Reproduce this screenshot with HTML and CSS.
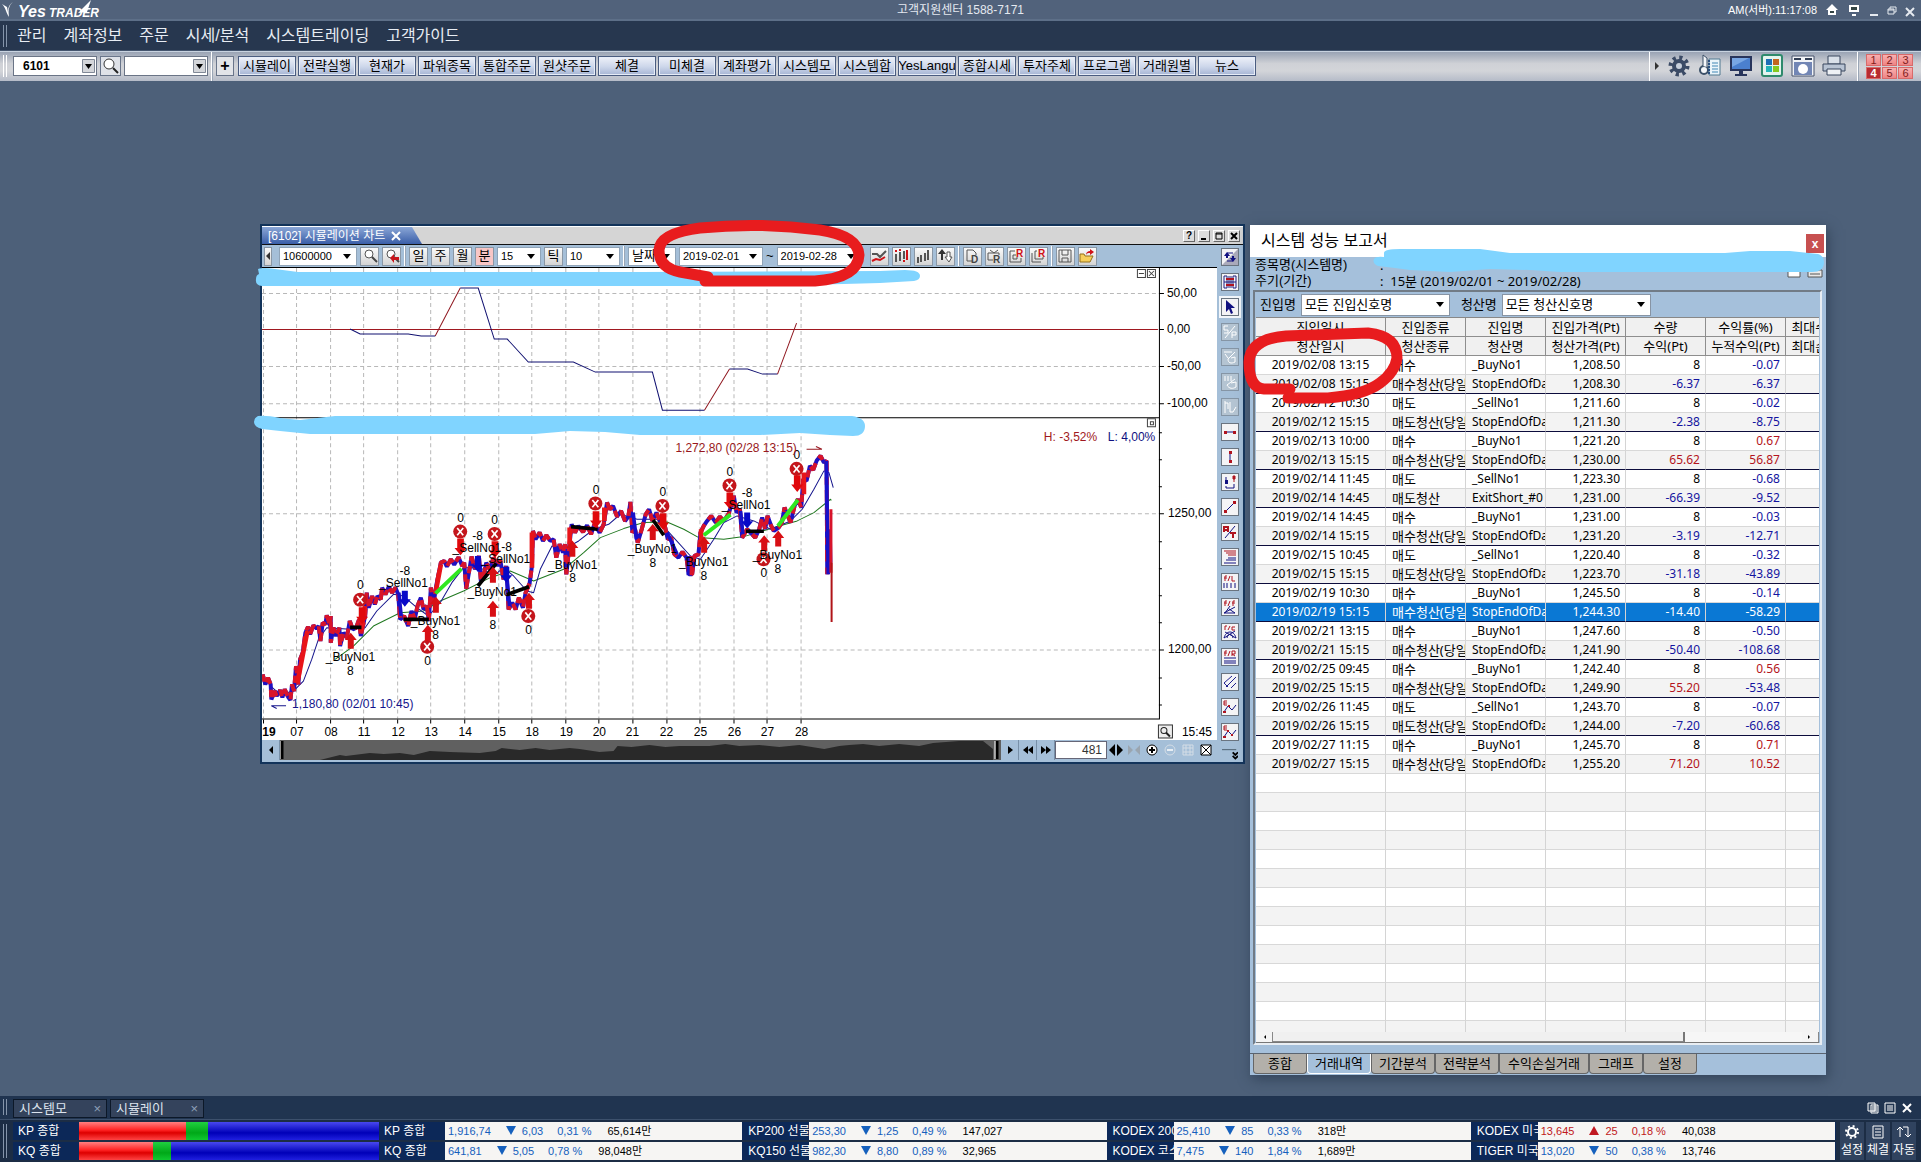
FILE: index.html
```html
<!DOCTYPE html>
<html lang="ko">
<head>
<meta charset="utf-8">
<title>YesTrader</title>
<link rel="stylesheet" href="styles.css">
</head>
<body>
<svg class="defs" aria-hidden="true">
  <defs>
    <g id="up"><path d="M0 0L18 22H9V48H-9V22H-18Z" fill="#d80f14"/></g>
    <g id="down"><path d="M0 0L18 -22H10V-50H-10V-22H-18Z" fill="#e0080c"/></g>
    <g id="short"><path d="M0 0L18 -22H9V-48H-9V-22H-18Z" fill="#0808c8"/></g>
    <g id="exit"><circle r="21" fill="#c4161c"/><path d="M-9 -11L9 11M9 -11L-9 11" stroke="#fff" stroke-width="5"/></g>
    <g id="glass"><circle cx="7" cy="6" r="4" fill="#fff" stroke="#555"/><path d="M10 9l5 5" stroke="#444" stroke-width="2"/></g>
    <path id="px" d="M38 735L46 765L54 745L62 765L64 810L74 785L80 800L90 782L97 804L104 780L114 802L121 812L126 765L132 785L138 710L145 765L150 690L158 670L166 610L174 592L180 615L190 588L200 598L206 590L211 635L218 580L226 585L230 558L240 590L242 560L242 640L250 595L258 620L268 595L270 650L280 610L290 625L299 575L308 600L318 595L327 570L332 620L345 560L350 490L356 535L366 500L374 525L382 500L392 510L396 475L406 495L416 472L426 490L436 475L444 495L450 570L462 560L474 590L484 545L494 568L502 530L512 505L520 540L530 530L536 575L542 475L550 525L558 470L566 430L572 400L582 395L590 412L602 390L612 406L625 384L636 410L642 400L648 478L656 430L664 382L674 420L686 380L692 456L700 440L708 400L718 420L730 385L742 410L750 392L760 450L768 410L775 540L786 520L796 540L806 505L818 535L826 490L838 462L845 410L848 305L856 330L868 310L878 335L888 318L900 335L910 330L918 385L928 345L938 370L944 345L948 435L956 360L964 285L974 310L984 290L998 308L1010 288L1022 315L1032 285L1048 310L1060 285L1070 220L1078 240L1088 230L1100 262L1112 245L1124 275L1134 262L1140 218L1146 310L1154 300L1162 340L1174 300L1186 255L1196 240L1206 275L1218 250L1230 280L1242 285L1252 330L1262 325L1272 375L1284 385L1296 368L1308 385L1315 435L1325 435L1332 380L1344 375L1350 310L1360 290L1370 275L1382 260L1396 280L1408 262L1420 275L1434 255L1442 230L1450 200L1458 250L1468 240L1475 325L1490 300L1502 312L1514 325L1526 300L1535 265L1544 300L1551 260L1562 290L1570 305L1584 295L1594 280L1602 235L1612 260L1620 280L1632 230L1642 210L1652 235L1658 150L1668 155L1678 110L1688 122L1698 95L1710 80L1720 100L1728 95L1730 435"/>
  </defs>
</svg>

<header class="titlebar">
  <svg class="logo" viewBox="0 0 104 20" role="img" aria-label="YesTrader">
    <path d="M2 4l5 3 2 10c-3-4-3-9-7-13zM13 2c-4 3-5 8-4 14-2-5-1-11 4-14z" fill="#fff"/>
    <path d="M78 13L91 0l-4 12z" fill="#fff"/>
    <text x="18" y="17" class="logo-yes">Yes</text>
    <text x="49" y="17" class="logo-trader">TRADER</text>
  </svg>
  <span class="support">고객지원센터 1588-7171</span>
  <div class="status">
    <span>AM(서버):11:17:08</span>
    <button aria-label="홈"><svg width="14" height="14"><path d="M7 1l6 6h-2v5H3V7H1z" fill="#fff"/><path d="M5 8h4v2H5z" fill="#344"/></svg></button>
    <button aria-label="화면"><svg width="14" height="14"><path d="M2 2h10v7H2zM5 11h4v2H5z" fill="#fff"/><path d="M4 4h6v3H4z" fill="#344"/></svg></button>
    <button aria-label="최소화"><svg width="10" height="14"><path d="M1 11h8v2H1z" fill="#e6eaf0"/></svg></button>
    <button aria-label="복원"><svg width="10" height="14"><path d="M3 6V4h6v5H7M1 6h6v5H1zM1 7h6" fill="none" stroke="#e6eaf0"/></svg></button>
    <button aria-label="닫기"><svg width="10" height="14"><path d="M1 5l8 8M9 5l-8 8" stroke="#e6eaf0" stroke-width="2"/></svg></button>
  </div>
</header>

<nav class="menu">
  <i class="grip"></i>
  <a href="#">관리</a><a href="#">계좌정보</a><a href="#">주문</a><a href="#">시세/분석</a><a href="#">시스템트레이딩</a><a href="#">고객가이드</a>
</nav>

<div class="toolbar">
  <i class="grip light"></i>
  <select class="code" aria-label="화면번호"><option>6101</option></select>
  <button class="sq" aria-label="검색"><svg width="18" height="18"><circle cx="7" cy="7" r="5" fill="#fff" stroke="#333"/><path d="M11 11l5 5" stroke="#222" stroke-width="2"/></svg></button>
  <select class="find" aria-label="메뉴"><option></option></select>
  <i class="vline"></i>
  <button class="plus" aria-label="추가">+</button>
  <div class="quick">
    <button>시뮬레이</button><button>전략실행</button><button>현재가</button><button>파워종목</button><button>통합주문</button><button>원샷주문</button><button>체결</button><button>미체결</button><button>계좌평가</button><button>시스템모</button><button>시스템합</button><button>YesLangu</button><button>종합시세</button><button>투자주체</button><button>프로그램</button><button>거래원별</button><button>뉴스</button>
  </div>
  <div class="tools">
    <button class="more" aria-label="더보기"><svg width="6" height="8"><path d="M1 0l4 4-4 4z" fill="#333"/></svg></button>
    <button aria-label="설정"><svg width="24" height="24"><circle cx="12" cy="12" r="8" fill="none" stroke="#3b4b66" stroke-width="5" stroke-dasharray="3 3.280"/><circle cx="12" cy="12" r="5" fill="#c8d0dc" stroke="#3b4b66" stroke-width="4"/></svg></button>
    <button aria-label="인증"><svg width="24" height="24"><circle cx="6" cy="16" r="4" fill="#f4f6f9" stroke="#3b5068" stroke-width="2"/><path d="M5 12V1l4 3v9" fill="#f4f6f9" stroke="#3b5068"/><path d="M11 5h11v16H11z" fill="#eaf4fa" stroke="#4f7890"/><path d="M14 9h6M14 12h6M14 15h6M14 18h6" stroke="#4187b5"/><path d="M11 6v15" stroke="#2a4f80" stroke-width="2" stroke-dasharray="2 1"/></svg></button>
    <button aria-label="모니터"><svg width="24" height="24"><path d="M1 2h22v15H1z" fill="#28355c"/><path d="M3 4h18v11H3z" fill="#4b80cf"/><path d="M3 13L20 4H3z" fill="#79a7e4"/><path d="M10 17h4v3h4v2H6v-2h4z" fill="#28355c"/></svg></button>
    <button aria-label="화면 배치"><svg width="24" height="24"><rect x="2" y="1" width="20" height="21" rx="2" fill="#e4f4ee" stroke="#2f8a6c" stroke-width="2"/><path d="M6 5h6v6H6z" fill="#1e6fb5"/><path d="M13 5h6v6h-6z" fill="#c2641f"/><path d="M6 12h6v6H6z" fill="#23b5b8"/><path d="M13 12h6v6h-6z" fill="#86c91e"/></svg></button>
    <button aria-label="캡처"><svg width="24" height="24"><path d="M1 2h22v20H1z" fill="#f3f5f8" stroke="#44506a"/><path d="M3 4h7v2H3zM14 4h7v2h-7z" fill="#333f55"/><path d="M3 8h18v13H3z" fill="#7286b5"/><circle cx="12" cy="15" r="5" fill="#fff"/></svg></button>
    <button aria-label="인쇄"><svg width="24" height="24"><path d="M6 2h12v8H6z" fill="#d9e0e9" stroke="#39475e"/><path d="M1 10h22v7H1z" fill="#b8c3d3" stroke="#39475e"/><path d="M5 15h14v6H5z" fill="#eef1f5" stroke="#39475e"/></svg></button>
    <i class="vline"></i>
    <div class="pages"><button>1</button><button>2</button><button>3</button><button class="on">4</button><button>5</button><button>6</button></div>
  </div>
</div>

<main class="desktop">
  <section class="win chart-win">
    <div class="chart-title">
      <h2>[6102] 시뮬레이션 차트 <button aria-label="탭 닫기"><svg width="10" height="10"><path d="M1 1l8 8M9 1l-8 8" stroke="#fff" stroke-width="2"/></svg></button></h2>
      <div class="winbtns">
        <button aria-label="도움말">?</button>
        <button aria-label="최소화"><svg width="8" height="8"><path d="M1 7h5" stroke="#000" stroke-width="2"/></svg></button>
        <button aria-label="최대화"><svg width="8" height="8"><path d="M1 1h6v6H1zM1 2h6" fill="none" stroke="#000"/></svg></button>
        <button aria-label="닫기"><svg width="8" height="8"><path d="M1 1l6 6M7 1l-6 6" stroke="#000" stroke-width="2"/></svg></button>
      </div>
    </div>
    <div class="chart-body">
      <div class="chart-main">
        <div class="chart-tools">
          <button class="thin" aria-label="이전"><svg width="4" height="8"><path d="M4 0v8L0 4z" fill="#333"/></svg></button>
          <select class="w78" aria-label="종목코드"><option>10600000</option></select>
          <button aria-label="종목 검색"><svg width="16" height="16"><use href="#glass"/></svg></button>
          <button aria-label="종목 재검색"><svg width="16" height="16"><use href="#glass"/><path d="M6 10l4-4v3h5v3h-5v3z" fill="#c8161c"/></svg></button>
          <i class="vline"></i>
          <button>일</button><button>주</button><button>월</button><button class="pink">분</button>
          <select class="w44" aria-label="분"><option>15</option></select>
          <button>틱</button>
          <select class="w54" aria-label="틱"><option>10</option></select>
          <i class="vline"></i>
          <select class="w48 ko" aria-label="기준"><option>날짜</option></select>
          <select class="w84" aria-label="시작일"><option>2019-02-01</option></select>
          <span>~</span>
          <select class="w84 last" aria-label="종료일"><option>2019-02-28</option></select>
          <button aria-label="지표"><svg width="16" height="16"><path d="M1 6h5l3 3 6-6" fill="none" stroke="#555" stroke-width="2"/><path d="M1 13l4-2 4 1 5-3" fill="none" stroke="#d01218" stroke-width="2"/></svg></button>
          <button aria-label="시스템"><svg width="16" height="16"><path d="M3 6v8M7 4v9M11 3v8" stroke="#555" stroke-width="2"/><path d="M3 2v2M7 1v2M11 12v2M14 2v10" stroke="#d01218" stroke-width="2"/></svg></button>
          <button aria-label="봉"><svg width="16" height="16"><path d="M3 9v6M6 7v7M10 5v8M13 2v10" stroke="#555" stroke-width="2"/></svg></button>
          <button aria-label="정렬"><svg width="16" height="16"><path d="M5 1l4 5H6v6H4V6H1z" fill="#333"/><path d="M10 4h3v5h2l-3 5-4-5h2z" fill="#fff" stroke="#555"/></svg></button>
          <i class="vline"></i>
          <button aria-label="문서"><svg width="16" height="16"><path d="M8 13H3V2h6l3 3v2" fill="none" stroke="#555"/><text x="7" y="15" class="glyph">D</text></svg></button>
          <button aria-label="방송"><svg width="16" height="16"><path d="M7 12H2V5h11v2M4 2l4 3 4-3" fill="none" stroke="#555"/><text x="7" y="15" class="glyph">R</text></svg></button>
          <button aria-label="그리드"><svg width="16" height="16"><path d="M7 3H2v11h11v-4M8 7H5v4h4v-2" fill="none" stroke="#555"/><text x="8" y="9" class="glyph red">R</text></svg></button>
          <button aria-label="복사"><svg width="16" height="16"><path d="M7 3H5v8h8v-2M2 5v9h9" fill="none" stroke="#555"/><text x="8" y="9" class="glyph red">R</text></svg></button>
          <i class="vline"></i>
          <button aria-label="저장"><svg width="16" height="16"><path d="M2 2h12v12H2zM5 2v5h6V2M5 14v-4h6v4" fill="none" stroke="#555"/></svg></button>
          <button aria-label="열기"><svg width="16" height="16"><path d="M1 14V6h4l1 2h8l-3 6z" fill="#f6cf5c" stroke="#94701a"/><path d="M7 7c0-3 2-4 4-4V1l4 3-4 3V5c-2 0-3 0-4 2z" fill="#d01218"/></svg></button>
        </div>
        <svg class="plot" viewBox="262 269 954 472" role="img" aria-label="시뮬레이션 차트">
          <path class="grid" d="M263.500 269V719M296.500 269V719M330.500 269V719M363.500 269V719M397.500 269V719M430.500 269V719M464.500 269V719M498.500 269V719M531.500 269V719M565.500 269V719M598.500 269V719M632.500 269V719M666.500 269V719M699.500 269V719M733.500 269V719M766.500 269V719M800.500 269V719M262 294.500H1158M262 367.500H1158M262 404.500H1158M262 514.500H1158M262 650.500H1158"/>
          <path d="M262 330.500H1157" stroke="#a01820" fill="none"/>
          <path class="crisp navy" d="M350 330L360 335H408L421 337H435M460 289H478L494 340H507L528 363H573L595 373H652L662 411H704M729 370H747L762 375H777"/>
          <path class="crisp maroon" d="M435 337L460 289M704 411L729 370M777 375L796 324"/>
          <path d="M262 418.500H1158M1158.500 269V719.500H262" stroke="#000" fill="none"/>
          <path d="M1158 294.500h5M1158 330.500h5M1158 367.500h5M1158 404.500h5M1158 514.500h5M1158 650.500h5M1158 433.500h3M1158 460.500h3M1158 487.500h3M1158 542.500h3M1158 569.500h3M1158 596.500h3M1158 623.500h3M1158 678.500h3M1158 705.500h3M263.500 720v4M296.500 720v4M330.500 720v4M363.500 720v4M397.500 720v4M430.500 720v4M464.500 720v4M498.500 720v4M531.500 720v4M565.500 720v4M598.500 720v4M632.500 720v4M666.500 720v4M699.500 720v4M733.500 720v4M766.500 720v4M800.500 720v4" stroke="#000" fill="none"/>
          <g class="lbl">
            <text x="1166" y="298">50,00</text><text x="1166" y="334">0,00</text><text x="1166" y="371">-50,00</text><text x="1166" y="408">-100,00</text>
            <text x="1167" y="518">1250,00</text><text x="1167" y="654">1200,00</text>
            <text x="1181" y="737">15:45</text>
            <text x="1043" y="442" fill="#a01820">H: -3,52%</text><text x="1107" y="442" fill="#101080">L: 4,00%</text>
          </g>
          <g class="lbl mid">
            <text x="269" y="737" font-weight="bold">19</text><text x="297" y="737">07</text><text x="331" y="737">08</text><text x="364" y="737">11</text><text x="398" y="737">12</text><text x="431" y="737">13</text><text x="465" y="737">14</text><text x="499" y="737">15</text><text x="532" y="737">18</text><text x="566" y="737">19</text><text x="599" y="737">20</text><text x="632" y="737">21</text><text x="666" y="737">22</text><text x="700" y="737">25</text><text x="734" y="737">26</text><text x="767" y="737">27</text><text x="801" y="737">28</text>
          </g>
          <g fill="#fff" stroke="#444"><path d="M1136.500 270.500h8v8h-8zM1146.500 270.500h8v8h-8zM1146.500 419.500h8v8h-8z"/><path d="M1138 274.500h5M1148 272l5 5M1153 272l-5 5M1149.500 422.500h3v3h-3z"/></g>
          <rect x="1157.500" y="725.500" width="14" height="13" fill="#eee" stroke="#333"/><circle cx="1163" cy="731" r="3" fill="none" stroke="#222"/><path d="M1165 733l4 4" stroke="#222" stroke-width="2"/>
          <svg x="250" y="430" width="400" height="340" viewBox="0 0 1200 1020" overflow="visible">
            <g fill="none" stroke-linejoin="bevel">
              <path d="M255 690L310 650L370 590L450 550L520 545L570 515L640 485L720 445L780 425L850 455L940 420L1000 370L1050 325L1120 298L1180 280L1250 278L1300 300L1345 325L1420 330L1480 322L1570 295L1640 275L1690 250L1740 210L1742 214" stroke="#207820" stroke-width="3"/>
              <path d="M62 770L90 795L130 785L160 755L185 690L205 630L230 595L300 600L345 595L380 545L430 495L460 500L500 535L535 560L570 520L605 460L640 415L690 415L730 440L760 415L790 440L830 485L850 490L870 420L905 350L950 355L985 335L1030 300L1075 285L1110 255L1160 270L1220 270L1270 325L1320 380L1350 390L1390 330L1420 280L1460 260L1510 275L1560 300L1620 275L1655 240L1690 180L1720 125L1735 130L1748 175" stroke="#14148c" stroke-width="3"/>
              <use href="#px" class="price-a"/>
              <use href="#px" class="price-b"/>
              <path d="M142 760L172 605M332 605L345 530M558 480L572 405M845 415V310M958 345V295M1062 275V235M1660 195V130M1352 350V300" stroke="#e8141a" stroke-width="14"/>
              <path d="M446 490L453 560M768 430L778 530M1148 250L1158 330M1250 310L1280 375M1314 380V438M1470 245L1477 315M1727 95L1733 435M1738 300L1740 400" stroke="#1810c8" stroke-width="11"/>
              <path d="M1322 380V438M1741 240V430" stroke="#d8142a" stroke-width="9"/>
              <path d="M1743 400V578" stroke="#b01418" stroke-width="6"/>
              <path d="M300 594H334M460 570H536M683 470L738 402M770 496L836 472M962 292L1042 300M1208 272L1240 318M1486 306H1540" stroke="#000" stroke-width="11"/>
              <path d="M556 492L634 418M1360 318L1440 256M1582 290L1642 212" stroke="#30e820" stroke-width="12"/>
              <path d="M108 829H64l16 8" stroke="#14148c" stroke-width="3"/><path d="M1668 60H1714l-18 -8" stroke="#981820" stroke-width="3"/>
            </g>
            <use href="#exit" x="330" y="511"/><use href="#down" x="336" y="584"/>
            <use href="#up" x="302" y="610"/>
            <use href="#short" x="464" y="532"/>
            <use href="#exit" x="531" y="652"/><use href="#up" x="533" y="586"/><use href="#up" x="557" y="502"/>
            <use href="#exit" x="630" y="307"/><use href="#down" x="631" y="378"/>
            <use href="#exit" x="733" y="314"/><use href="#down" x="734" y="386"/>
            <use href="#short" x="683" y="428"/><use href="#short" x="768" y="460"/>
            <use href="#up" x="728" y="412"/><use href="#up" x="728" y="514"/>
            <use href="#exit" x="834" y="560"/><use href="#up" x="836" y="490"/>
            <use href="#up" x="966" y="334"/>
            <use href="#exit" x="1035" y="223"/><use href="#down" x="1037" y="296"/>
            <use href="#exit" x="1236" y="230"/><use href="#down" x="1238" y="302"/><use href="#up" x="1207" y="284"/>
            <use href="#up" x="1361" y="322"/>
            <use href="#exit" x="1437" y="169"/><use href="#down" x="1438" y="240"/><use href="#short" x="1490" y="298"/>
            <use href="#exit" x="1539" y="390"/><use href="#up" x="1541" y="318"/><use href="#up" x="1583" y="304"/>
            <use href="#exit" x="1638" y="119"/><use href="#down" x="1640" y="188"/>
            <g class="sig">
              <text x="331" y="480">0</text><text x="301" y="695">_BuyNo1</text><text x="301" y="736">8</text>
              <text x="464" y="436">-8</text><text x="460" y="473">_SellNo1</text>
              <text x="556" y="587">_BuyNo1</text><text x="556" y="628">8</text><text x="532" y="707">0</text>
              <text x="631" y="278">0</text><text x="682" y="331">-8</text><text x="680" y="368">_SellNo1</text>
              <text x="733" y="283">0</text><text x="769" y="365">-8</text><text x="767" y="401">_SellNo1</text>
              <text x="726" y="500">_BuyNo1</text><text x="728" y="598">8</text><text x="835" y="614">0</text>
              <text x="967" y="418">_BuyNo1</text><text x="967" y="459">8</text><text x="1037" y="194">0</text>
              <text x="1206" y="371">_BuyNo1</text><text x="1207" y="412">8</text><text x="1237" y="199">0</text>
              <text x="1360" y="409">_BuyNo1</text><text x="1360" y="451">8</text>
              <text x="1438" y="139">0</text><text x="1490" y="202">-8</text><text x="1487" y="239">_SellNo1</text>
              <text x="1581" y="389">_BuyNo1</text><text x="1582" y="430">8</text><text x="1540" y="443">0</text><text x="1639" y="89">0</text>
            </g>
            <text class="note" x="126" y="836" fill="#14148c">1,180,80 (02/01 10:45)</text>
            <text class="note" x="1275" y="68" fill="#981820">1,272,80 (02/28 13:15)</text>
          </svg>
        </svg>
        <div class="scroll">
          <button aria-label="왼쪽"><svg width="16" height="16"><path d="M10 4v8L6 8z" fill="#000"/></svg></button>
          <svg class="overview" viewBox="0 0 722 20" preserveAspectRatio="none"><rect width="722" height="20" fill="#606060"/><path d="M40 20L60 15L66 16L90 13L104 14L120 13L134 15L150 11L170 12L200 13L216 11L222 8L240 10L256 8L270 10L290 8L300 9L320 12L334 11L338 6L352 7L370 5L386 7L400 6L430 6L446 4L460 6L480 5L500 7L520 5L545 9L560 6L570 5L584 4L600 6L620 4L640 6L654 3L680 1H704L714 9V20Z" fill="#292929"/><path d="M2 1V19M718 1V19" stroke="#000" stroke-width="3"/><path d="M0 1V19M716 1V19" stroke="#fff"/></svg>
          <button aria-label="오른쪽"><svg width="16" height="16"><path d="M6 4v8l5-4z" fill="#000"/></svg></button>
          <button aria-label="뒤로"><svg width="16" height="16"><path d="M8 4v8L3 8zM13 4v8L8 8z" fill="#000"/></svg></button>
          <button aria-label="앞으로"><svg width="16" height="16"><path d="M3 4v8l5-4zM8 4v8l5-4z" fill="#000"/></svg></button>
          <input type="text" value="481" aria-label="봉 개수">
          <button class="flat" aria-label="넓게"><svg width="14" height="14"><path d="M6 1v12L0 7zM8 1v12l6-6z" fill="#000"/></svg></button>
          <button class="flat" aria-label="좁게"><svg width="14" height="14"><path d="M1 2v10l5-5zM13 2v10L8 7z" fill="#9aa5b0"/></svg></button>
          <button class="flat" aria-label="확대"><svg width="14" height="14"><circle cx="7" cy="7" r="5" fill="#fff" stroke="#000"/><path d="M4 7h6M7 4v6" stroke="#000" stroke-width="2"/></svg></button>
          <button class="flat" aria-label="축소"><svg width="14" height="14"><circle cx="7" cy="7" r="5" fill="none" stroke="#d4dde6"/><path d="M4 7h6" stroke="#e8eef4" stroke-width="2"/></svg></button>
          <button class="flat" aria-label="격자"><svg width="14" height="14"><path d="M2 2h10v10H2zM2 5h10M2 9h10M5 2v10M9 2v10" fill="none" stroke="#d4dde6"/></svg></button>
          <button class="flat" aria-label="전체"><svg width="14" height="14"><path d="M2 2h10v10H2zM2 2l10 10M12 2L2 12" fill="#fff" stroke="#000"/></svg></button>
        </div>
      </div>
      <div class="side">
        <button aria-label="새로고침"><svg viewBox="0 0 16 16"><path d="M0 16L16 0V16Z" fill="#aab"/><path d="M2 7l3-4 3 4H6v2H4V7zM14 9l-3 4-3-4h2V7h2v2z" fill="#101080"/><path d="M5 4h6M5 12h6" stroke="#101080"/></svg></button>
        <button aria-label="연결"><svg viewBox="0 0 16 16"><path d="M2 2h3v12H2zM11 2h3v12h-3zM7 2v12M9 2v12M2 8h12" fill="none" stroke="#202080"/><path d="M4 5h8M4 11h8" stroke="#b01420" stroke-width="2"/></svg></button>
        <button class="sel" aria-label="선택"><svg viewBox="0 0 16 16"><path d="M4 1v12l3-3 2 5 2-1-2-5h4z" fill="#101080"/></svg></button>
        <button class="off" aria-label="도구 1"><svg viewBox="0 0 16 16"><path d="M6 2H2v4h4v3H2M13 2L3 14M10 14V8h4v3h-4"/></svg></button>
        <button class="off" aria-label="도구 2"><svg viewBox="0 0 16 16"><path d="M2 3h8M3 5l3 4M13 3L6 10c0 4 3 5 7 3V8L9 9"/></svg></button>
        <button class="off" aria-label="도구 3"><svg viewBox="0 0 16 16"><path d="M3 2v5M6 2v5M9 2v5M13 5l-8 6c2 4 6 4 9 2V8L9 9"/></svg></button>
        <button class="off" aria-label="도구 4"><svg viewBox="0 0 16 16"><path d="M3 2v12M3 4h3v6M8 3v10h3l3-5"/></svg></button>
        <button aria-label="수평선"><svg viewBox="0 0 16 16"><path d="M3 8h10" stroke="#101080"/><path d="M2 7h3v3H2zM11 7h3v3h-3z" fill="#b01420"/></svg></button>
        <button aria-label="수직선"><svg viewBox="0 0 16 16"><path d="M8 3v10" stroke="#101080"/><path d="M7 2h3v3H7zM7 11h3v3H7z" fill="#b01420"/></svg></button>
        <button aria-label="봉 연결"><svg viewBox="0 0 16 16"><path d="M4 3v7M4 12v2h8v-4" fill="none" stroke="#101080"/><path d="M3 6h3v4H3z" fill="#101080"/><path d="M11 2h2v3h-2zM12 5v3" fill="#b01420" stroke="#b01420"/></svg></button>
        <button aria-label="추세선"><svg viewBox="0 0 16 16"><path d="M3 13L13 3" stroke="#101080"/><path d="M2 11h3v3H2zM11 2h3v3h-3z" fill="#b01420"/></svg></button>
        <button aria-label="문자"><svg viewBox="0 0 16 16"><path d="M2 8V3h4v5M2 6h4M8 9h6M11 9v5" fill="none" stroke="#b01420" stroke-width="2"/><path d="M3 14L13 2" stroke="#101080"/></svg></button>
        <button aria-label="되돌림"><svg viewBox="0 0 16 16"><path d="M2 2h12M4 4h10M6 6h8" stroke="#b01420"/><path d="M6 9h8M4 11h10M2 14h12" stroke="#101080"/></svg></button>
        <button aria-label="피보나치 선"><svg viewBox="0 0 16 16"><path d="M5 2H3v5M2 4h3M8 2L6 7M10 2v5h3" fill="none" stroke="#b01420"/><path d="M2 9v5M5 9v5M9 9v5M13 9v5" stroke="#101080"/></svg></button>
        <button aria-label="피보나치 부채"><svg viewBox="0 0 16 16"><path d="M5 2H3v5M2 4h3M8 2L6 7M13 2h-2v5M10 4h3" fill="none" stroke="#b01420"/><path d="M2 14L13 8M3 14l5-7M2 14h11M7 10l6 4" stroke="#101080"/></svg></button>
        <button aria-label="피보나치 원호"><svg viewBox="0 0 16 16"><path d="M5 2H3v4M8 2L6 6M13 3h-3v3h3" fill="none" stroke="#b01420"/><path d="M2 14c2-8 10-8 12 0M5 14c1-5 5-5 6 0M3 8l11 6M13 7L2 14" fill="none" stroke="#101080"/></svg></button>
        <button aria-label="피보나치 비율"><svg viewBox="0 0 16 16"><path d="M5 2H3v5M2 4h3M8 2L6 7M10 7V2h3v3h-3l3 2" fill="none" stroke="#b01420"/><path d="M2 9h12M2 12h12M2 14h12" stroke="#101080"/></svg></button>
        <button aria-label="평행선"><svg viewBox="0 0 16 16"><path d="M2 9l8-7M4 13L14 3M9 14l5-5M2 9l4 4" stroke="#202090" fill="none"/></svg></button>
        <button aria-label="엘리엇 1"><svg viewBox="0 0 16 16"><path d="M5 2H2v4h3M2 4h3" stroke="#b01420" fill="none"/><path d="M2 13l4-6 4 4 4-5" stroke="#101080" fill="none"/><path d="M1 12h3v2H1zM6 6h2v2H6z" fill="#b01420"/></svg></button>
        <button aria-label="엘리엇 2"><svg viewBox="0 0 16 16"><path d="M5 2H2v4h3M2 4h3" stroke="#b01420" fill="none"/><path d="M2 13l4-6 4 4 4-5" stroke="#101080" fill="none"/><path d="M1 12h3v2H1zM5 6h2v2H5zM9 10h2v2H9z" fill="#b01420"/></svg></button>
        <button class="expand" aria-label="펼치기"><svg viewBox="0 0 18 14"><path d="M0 1h16" stroke="#456"/><path d="M12 4l3 3 3-3M12 8l3 3 3-3" fill="none" stroke="#000" stroke-width="2"/></svg></button>
      </div>
    </div>
  </section>

  <section class="win report">
    <div class="report-title"><h2>시스템 성능 보고서</h2><button aria-label="닫기">x</button></div>
    <div class="info">
      <dl><dt>종목명(시스템명)</dt><dd>:</dd><dt>주기(기간)</dt><dd>: &nbsp;15분 (2019/02/01 ~ 2019/02/28)</dd></dl>
      <div class="info-icons"><svg width="14" height="12"><path d="M1 0h12v11H1z" fill="#fff" stroke="#555"/></svg><svg width="16" height="12"><path d="M4 0h8v4H4zM1 4h14v7H1z" fill="#e8e8e8" stroke="#555"/><path d="M3 8h10" stroke="#555"/></svg></div>
    </div>
    <div class="panel">
      <div class="filters">
        <label for="entry">진입명</label><select id="entry"><option>모든 진입신호명</option></select>
        <label for="exitn">청산명</label><select id="exitn"><option>모든 청산신호명</option></select>
      </div>
      <div class="grid-wrap">
        <table>
          <colgroup><col class="c1"><col class="c2"><col class="c2"><col class="c2"><col class="c2"><col class="c2"><col class="c2"></colgroup>
          <thead>
            <tr><th>진입일시</th><th>진입종류</th><th>진입명</th><th>진입가격(Pt)</th><th>수량</th><th>수익률(%)</th><th>최대수익(Pt)</th></tr>
            <tr><th>청산일시</th><th>청산종류</th><th>청산명</th><th>청산가격(Pt)</th><th>수익(Pt)</th><th>누적수익(Pt)</th><th>최대손실(Pt)</th></tr>
          </thead>
          <tbody class="data">
            <tr><td>2019/02/08 13:15</td><td>매수</td><td>_BuyNo1</td><td>1,208.50</td><td>8</td><td class="n">-0.07</td><td></td></tr>
            <tr><td>2019/02/08 15:15</td><td>매수청산(당일)</td><td>StopEndOfDay</td><td>1,208.30</td><td class="n">-6.37</td><td class="n">-6.37</td><td></td></tr>
            <tr><td>2019/02/12 10:30</td><td>매도</td><td>_SellNo1</td><td>1,211.60</td><td>8</td><td class="n">-0.02</td><td></td></tr>
            <tr><td>2019/02/12 15:15</td><td>매도청산(당일)</td><td>StopEndOfDay</td><td>1,211.30</td><td class="n">-2.38</td><td class="n">-8.75</td><td></td></tr>
            <tr><td>2019/02/13 10:00</td><td>매수</td><td>_BuyNo1</td><td>1,221.20</td><td>8</td><td class="p">0.67</td><td></td></tr>
            <tr><td>2019/02/13 15:15</td><td>매수청산(당일)</td><td>StopEndOfDay</td><td>1,230.00</td><td class="p">65.62</td><td class="p">56.87</td><td></td></tr>
            <tr><td>2019/02/14 11:45</td><td>매도</td><td>_SellNo1</td><td>1,223.30</td><td>8</td><td class="n">-0.68</td><td></td></tr>
            <tr><td>2019/02/14 14:45</td><td>매도청산</td><td>ExitShort_#0</td><td>1,231.00</td><td class="n">-66.39</td><td class="n">-9.52</td><td></td></tr>
            <tr><td>2019/02/14 14:45</td><td>매수</td><td>_BuyNo1</td><td>1,231.00</td><td>8</td><td class="n">-0.03</td><td></td></tr>
            <tr><td>2019/02/14 15:15</td><td>매수청산(당일)</td><td>StopEndOfDay</td><td>1,231.20</td><td class="n">-3.19</td><td class="n">-12.71</td><td></td></tr>
            <tr><td>2019/02/15 10:45</td><td>매도</td><td>_SellNo1</td><td>1,220.40</td><td>8</td><td class="n">-0.32</td><td></td></tr>
            <tr><td>2019/02/15 15:15</td><td>매도청산(당일)</td><td>StopEndOfDay</td><td>1,223.70</td><td class="n">-31.18</td><td class="n">-43.89</td><td></td></tr>
            <tr><td>2019/02/19 10:30</td><td>매수</td><td>_BuyNo1</td><td>1,245.50</td><td>8</td><td class="n">-0.14</td><td></td></tr>
            <tr class="picked"><td>2019/02/19 15:15</td><td>매수청산(당일)</td><td>StopEndOfDay</td><td>1,244.30</td><td>-14.40</td><td>-58.29</td><td></td></tr>
            <tr><td>2019/02/21 13:15</td><td>매수</td><td>_BuyNo1</td><td>1,247.60</td><td>8</td><td class="n">-0.50</td><td></td></tr>
            <tr><td>2019/02/21 15:15</td><td>매수청산(당일)</td><td>StopEndOfDay</td><td>1,241.90</td><td class="n">-50.40</td><td class="n">-108.68</td><td></td></tr>
            <tr><td>2019/02/25 09:45</td><td>매수</td><td>_BuyNo1</td><td>1,242.40</td><td>8</td><td class="p">0.56</td><td></td></tr>
            <tr><td>2019/02/25 15:15</td><td>매수청산(당일)</td><td>StopEndOfDay</td><td>1,249.90</td><td class="p">55.20</td><td class="n">-53.48</td><td></td></tr>
            <tr><td>2019/02/26 11:45</td><td>매도</td><td>_SellNo1</td><td>1,243.70</td><td>8</td><td class="n">-0.07</td><td></td></tr>
            <tr><td>2019/02/26 15:15</td><td>매도청산(당일)</td><td>StopEndOfDay</td><td>1,244.00</td><td class="n">-7.20</td><td class="n">-60.68</td><td></td></tr>
            <tr><td>2019/02/27 11:15</td><td>매수</td><td>_BuyNo1</td><td>1,245.70</td><td>8</td><td class="p">0.71</td><td></td></tr>
            <tr><td>2019/02/27 15:15</td><td>매수청산(당일)</td><td>StopEndOfDay</td><td>1,255.20</td><td class="p">71.20</td><td class="p">10.52</td><td></td></tr>
          </tbody>
          <tbody>
            <tr><td></td><td></td><td></td><td></td><td></td><td></td><td></td></tr>
            <tr><td></td><td></td><td></td><td></td><td></td><td></td><td></td></tr>
            <tr><td></td><td></td><td></td><td></td><td></td><td></td><td></td></tr>
            <tr><td></td><td></td><td></td><td></td><td></td><td></td><td></td></tr>
            <tr><td></td><td></td><td></td><td></td><td></td><td></td><td></td></tr>
            <tr><td></td><td></td><td></td><td></td><td></td><td></td><td></td></tr>
            <tr><td></td><td></td><td></td><td></td><td></td><td></td><td></td></tr>
            <tr><td></td><td></td><td></td><td></td><td></td><td></td><td></td></tr>
            <tr><td></td><td></td><td></td><td></td><td></td><td></td><td></td></tr>
            <tr><td></td><td></td><td></td><td></td><td></td><td></td><td></td></tr>
            <tr><td></td><td></td><td></td><td></td><td></td><td></td><td></td></tr>
            <tr><td></td><td></td><td></td><td></td><td></td><td></td><td></td></tr>
            <tr><td></td><td></td><td></td><td></td><td></td><td></td><td></td></tr>
            <tr><td></td><td></td><td></td><td></td><td></td><td></td><td></td></tr>
          </tbody>
        </table>
      </div>
      <div class="hscroll"><button aria-label="왼쪽"><svg width="6" height="6"><path d="M5 1v4L3 3z"/></svg></button><i class="thumb"></i><button aria-label="오른쪽"><svg width="6" height="6"><path d="M1 1v4l2-2z"/></svg></button></div>
    </div>
    <div class="tabs"><button class="t54">종합</button><button class="t64 on">거래내역</button><button class="t64">기간분석</button><button class="t64">전략분석</button><button class="t90">수익손실거래</button><button class="t54">그래프</button><button class="t54">설정</button></div>
  </section>

  <svg class="marks" width="1921" height="1015" viewBox="0 81 1921 1015" aria-hidden="true">
    <path d="M258 269Q262 267 275 269L298 272H640L880 271L905 270Q920 270 920 276Q920 280 914 281L880 283L770 286H262Q255 285 256 279Q256 275 259 274Z"/>
    <path d="M258 416Q266 415 280 418L300 420L335 416H852Q865 418 865 426Q865 436 853 436L830 435L800 433L760 435H640L605 432L570 431L535 434H310L280 431L262 429Q254 427 254 422Q254 418 258 416Z"/>
    <path d="M1384 253Q1384 249 1400 249H1480L1510 253H1725L1750 251L1790 251L1818 254Q1824 256 1824 262Q1824 272 1812 272L1700 272H1560L1530 270L1490 269L1450 272L1410 270L1395 268L1378 266Q1372 263 1374 259Q1376 256 1384 257Z"/>
    <path class="ring" d="M708 277L680 272Q659 268 659 250Q660 233 700 228Q760 222 820 230Q858 236 859 255Q858 278 815 281H705"/>
    <path class="ring" d="M1290 389H1264Q1249 388 1249 362Q1250 339 1286 336L1368 333Q1397 336 1397 358Q1395 372 1380 383Q1364 395 1328 398H1288"/>
  </svg>
</main>

<footer>
  <div class="tasks">
    <i class="grip"></i>
    <div class="task">시스템모<button aria-label="닫기">×</button></div><div class="task">시뮬레이<button aria-label="닫기">×</button></div>
    <div class="task-icons">
      <button aria-label="창 배열"><svg width="12" height="12"><path d="M1 1h7v8H1zM4 3h7v8H4zM5 5h5M5 7h5M5 9h5" fill="#34465f" stroke="#fff"/></svg></button>
      <button aria-label="목록"><svg width="12" height="12"><path d="M1 1h10v10H1zM3 4h6M3 6h6M3 8h6" fill="none" stroke="#fff"/></svg></button>
      <button aria-label="닫기"><svg width="12" height="12"><path d="M2 2l8 8M10 2l-8 8" stroke="#fff" stroke-width="2"/></svg></button>
    </div>
  </div>
  <div class="ticker">
    <i class="grip"></i>
    <div class="rows">
      <div class="row"><b>KP 종합</b><svg class="bar" viewBox="0 0 300 18" preserveAspectRatio="none"><defs><linearGradient id="r" x2="0" y2="1"><stop stop-color="#ff8080"/><stop offset=".45" stop-color="#f22"/><stop offset=".6" stop-color="#d00"/><stop offset="1" stop-color="#f44"/></linearGradient><linearGradient id="b" x2="0" y2="1"><stop stop-color="#4848f0"/><stop offset=".6" stop-color="#0000b8"/><stop offset="1" stop-color="#2020e0"/></linearGradient><linearGradient id="g" x2="0" y2="1"><stop stop-color="#20d040"/><stop offset=".6" stop-color="#00a818"/><stop offset="1" stop-color="#10c830"/></linearGradient></defs><rect width="108" height="18" fill="url(#r)"/><rect x="107" width="22" height="18" fill="url(#g)"/><rect x="129" width="171" height="18" fill="url(#b)"/></svg>
        <b>KP 종합</b><p class="dn"><span>1,916,74</span><i></i><span>6,03</span><span>0,31 %</span><em>65,614만</em></p>
        <b>KP200 선물</b><p class="dn"><span>253,30</span><i></i><span>1,25</span><span>0,49 %</span><em>147,027</em></p>
        <b>KODEX 200</b><p class="dn"><span>25,410</span><i></i><span>85</span><span>0,33 %</span><em>318만</em></p>
        <b>KODEX 미국</b><p class="up"><span>13,645</span><i></i><span>25</span><span>0,18 %</span><em>40,038</em></p></div>
      <div class="row"><b>KQ 종합</b><svg class="bar" viewBox="0 0 300 18" preserveAspectRatio="none"><rect width="75" height="18" fill="url(#r)"/><rect x="74" width="18" height="18" fill="url(#g)"/><rect x="92" width="208" height="18" fill="url(#b)"/></svg>
        <b>KQ 종합</b><p class="dn"><span>641,81</span><i></i><span>5,05</span><span>0,78 %</span><em>98,048만</em></p>
        <b>KQ150 선물</b><p class="dn"><span>982,30</span><i></i><span>8,80</span><span>0,89 %</span><em>32,965</em></p>
        <b>KODEX 코스닥</b><p class="dn"><span>7,475</span><i></i><span>140</span><span>1,84 %</span><em>1,689만</em></p>
        <b>TIGER 미국</b><p class="dn"><span>13,020</span><i></i><span>50</span><span>0,38 %</span><em>13,746</em></p></div>
    </div>
    <div class="foot-btns">
      <button><svg width="16" height="16"><circle cx="8" cy="8" r="4" fill="none" stroke="#fff" stroke-width="2"/><circle cx="8" cy="8" r="6" fill="none" stroke="#fff" stroke-width="2" stroke-dasharray="2 2.700"/></svg>설정</button>
      <button><svg width="16" height="16"><path d="M3 2h10v12H3zM5 5h6M5 8h6M5 11h6" fill="none" stroke="#fff"/></svg>체결</button>
      <button><svg width="16" height="16"><path d="M4 13V3M1 6l3-3 3 3M7 3h5v10M9 10l3 3 3-3" fill="none" stroke="#fff"/></svg>자동</button>
    </div>
  </div>
</footer>
</body>
</html>
```
FILE: styles.css
```css
* { box-sizing: border-box; }
body {
  margin: 0;
  min-height: 100vh;
  display: flex;
  flex-direction: column;
  background: #4d6079;
  font: 13px/16px "Liberation Sans", "Noto Sans CJK KR", sans-serif;
  color: #000;
  overflow-x: hidden;
}
button, select, input { font: inherit; color: inherit; margin: 0; padding: 0; border-radius: 0; }
button { border: 0; background: none; display: flex; align-items: center; justify-content: center; white-space: nowrap; overflow: hidden; flex: none; }
h2, p, dl, dd { margin: 0; font-weight: normal; }
svg { display: block; flex: none; }
.defs { position: absolute; width: 0; height: 0; }
select {
  appearance: none;
  border: 1px solid #8794a4;
  background: #fff url("data:image/svg+xml,%3Csvg xmlns='http://www.w3.org/2000/svg' width='8' height='5'%3E%3Cpath d='M0 0h8L4 5z'/%3E%3C/svg%3E") no-repeat right 5px center;
  padding-left: 3px;
  flex: none;
}

/* application header */
.titlebar { height: 21px; display: grid; grid-template-columns: 1fr auto 1fr; align-items: center; background: #51627b; color: #e4e9f0; border-bottom: 2px solid #5d6f88; }
.logo { width: 104px; height: 20px; }
.logo-yes { font: italic bold 16px "Liberation Sans", sans-serif; fill: #fff; }
.logo-trader { font: italic bold 12px "Liberation Sans", sans-serif; fill: #fff; }
.support { font-size: 12px; }
.status { display: flex; justify-content: flex-end; align-items: center; gap: 8px; padding-right: 6px; font-size: 11px; color: #fff; }
.menu { height: 30px; display: flex; align-items: center; gap: 17px; background: #27374f; border-bottom: 1px solid #45566f; font-size: 16px; line-height: 20px; }
.menu a { color: #e8edf4; text-decoration: none; }
.grip { width: 4px; height: 22px; margin-left: 3px; border: 1px solid #8494aa; border-width: 0 1px; flex: none; }
.menu .grip { margin-right: -7px; }
.toolbar { height: 30px; display: flex; align-items: center; gap: 3px; padding-bottom: 1px; border-top: 1px solid #c8d3e0; background: linear-gradient(#99a3b4, #cfd1d6 40%, #d3d5d9 65%, #b5bbc8); }
.light { border-color: #fff; margin-right: 3px; }
.toolbar select {
  width: 84px;
  height: 20px;
  border-color: #6a7486;
  background-image: url("data:image/svg+xml,%3Csvg xmlns='http://www.w3.org/2000/svg' width='13' height='14'%3E%3Cpath d='M.5.5h12v13H.5z' fill='%23d4d6da' stroke='%23808896'/%3E%3Cpath d='M3 5h7l-3.500 5z'/%3E%3C/svg%3E");
  background-position: right 1px center;
}
.toolbar .code { font-weight: bold; font-size: 12px; padding-left: 9px; }
.sq { width: 21px; height: 20px; border: 1px solid #69758a; background: #dfe2e8; }
.vline { width: 2px; height: 29px; border-left: 1px solid #fff; border-right: 1px solid #9aa6b6; flex: none; }
.plus { width: 18px; height: 20px; border: 1px solid #69758a; background: #e2e4e8; font-weight: bold; font-size: 16px; }
.quick { display: flex; gap: 2px; margin-left: 1px; }
.quick button { width: 58px; height: 20px; border: 1px solid #4a5c80; background: linear-gradient(#eef1f9, #ccd6ea 55%, #a6b5d4); box-shadow: inset 0 0 0 1px #e6ecf7; }
.tools { display: flex; align-items: center; gap: 7px; margin-left: auto; padding-right: 8px; border-left: 1px solid #fff; height: 29px; }
.tools .vline { margin-left: 4px; }
.more { padding: 0 0 0 4px; }
.pages { display: grid; grid-template-columns: repeat(3, 15px); gap: 1px; }
.pages button { height: 12px; font-size: 11px; line-height: 12px; background: linear-gradient(#f8b0b0, #ef8484); border: 1px solid #d86a6a; color: #801c1c; }
.pages .on { background: #b82c30; color: #fff; font-weight: bold; }

/* desktop and its floating windows */
.desktop { position: relative; flex: 1; min-height: 1015px; }
.win { position: absolute; display: flex; flex-direction: column; }
.marks { position: absolute; top: 0; left: 0; pointer-events: none; fill: #80d4ff; }
.ring { fill: none; stroke: #e81c1e; stroke-width: 11; stroke-linecap: round; stroke-linejoin: round; }

.chart-win { left: 260px; top: 143px; width: 985px; border: 2px solid #12335a; background: #a5bfd8; }
.chart-title { display: flex; justify-content: space-between; height: 18px; background: #d5d5d5; border-top: 1px solid #fff; }
.chart-title h2 { display: flex; align-items: center; gap: 6px; width: 160px; padding-left: 6px; color: #fff; font-size: 12px; background: linear-gradient(#8aa6d6, #3a5ea8); clip-path: polygon(0 0, 150px 0, 100% 100%, 0 100%); }
.winbtns { display: flex; gap: 3px; padding: 3px 3px 0 0; }
.winbtns button { width: 12px; height: 12px; background: #ddd; border: 1px solid #777; border-color: #fff #666 #666 #fff; font-size: 10px; font-weight: bold; }
.chart-body { display: flex; border-top: 1px solid #111; }
.chart-main { flex: 1; min-width: 0; }
.chart-tools { display: flex; align-items: center; gap: 3px; height: 23px; padding-left: 2px; border-bottom: 1px solid #000; }
.chart-tools button { width: 19px; height: 19px; background: linear-gradient(#fafafa, #d4d4d4); border: 1px solid #8a97a5; }
.chart-tools .thin { width: 8px; margin-right: 4px; }
.chart-tools .pink { background: #f8c6c6; }
.chart-tools .vline { height: 20px; }
.chart-tools select { height: 19px; font-size: 11px; border-color: #90a4b8; }
.chart-tools .ko { font-size: 13px; }
.chart-tools .last { margin-right: 6px; }
.w78 { width: 78px; } .w44 { width: 44px; } .w54 { width: 54px; } .w48 { width: 48px; } .w84 { width: 84px; }
.glyph { font: bold 10px "Liberation Sans", sans-serif; fill: #444; }
.red { fill: #d01218; }
.plot { width: 100%; height: auto; background: #fff; }
.grid { fill: none; stroke: #b8b8b8; stroke-dasharray: 4 3; }
.crisp { fill: none; stroke-width: 1; }
.navy { stroke: #101070; }
.maroon { stroke: #901820; }
.lbl { font-size: 12px; }
.mid { text-anchor: middle; }
.sig { font-size: 36px; text-anchor: middle; }
.note { font-size: 36px; }
.price-a { stroke: #2010c0; stroke-width: 12; }
.price-b { stroke: #d8142a; stroke-width: 12; stroke-dasharray: 22 16 34 18; }
.scroll { display: flex; height: 20px; align-items: center; padding-right: 2px; }
.scroll button { width: 18px; height: 20px; border-right: 1px solid #7890a8; }
.scroll .flat { border: 0; }
.overview { flex: 1; min-width: 0; width: 100%; height: 20px; }
.scroll input { width: 52px; height: 18px; border: 1px solid #667; text-align: right; padding-right: 4px; font-size: 12px; color: #333; background: #fff; }
.side { width: 26px; display: flex; flex-direction: column; align-items: center; gap: 7px; padding-top: 3px; }
.side button { width: 18px; height: 18px; background: #f4f4f6; border: 1px solid #6a7480; }
.side svg { width: 16px; height: 16px; }
.side .sel { outline: 2px solid #f2f6fa; }
.side .off { background: #b4c4d2; border-color: #8595a5; }
.off path { fill: none; stroke: #fff; }
.side .expand { background: none; border: 0; height: 14px; }

.report { left: 1250px; top: 144px; width: 576px; height: 850px; background: #a5c0db; box-shadow: 2px 4px 12px #33445a; }
.report-title { height: 32px; display: flex; align-items: center; justify-content: space-between; background: #fff; padding: 0 2px 0 11px; font-size: 16px; }
.report-title h2 { font-size: 16px; }
.report-title button { width: 18px; height: 19px; margin-top: 5px; background: #c75050; color: #fff; font-size: 12px; font-weight: bold; }
.info { display: flex; justify-content: space-between; align-items: flex-end; height: 33px; padding: 0 3px 12px 5px; }
.info dl { display: grid; grid-template-columns: 125px auto; align-self: flex-start; line-height: 16px; }
.info dd { font-family: "Noto Sans", "Noto Sans CJK KR", sans-serif; }
.info-icons { display: flex; gap: 6px; align-items: flex-end; }
.panel { flex: 1; min-height: 0; display: flex; flex-direction: column; margin: 0 4px 8px 3px; border: 2px solid #717b86; border-right-color: #e8edf2; border-bottom-color: #e8edf2; padding: 0 1px; }
.filters { display: flex; align-items: center; gap: 5px; height: 25px; padding-left: 4px; }
.filters select { width: 149px; height: 22px; }
.filters #entry { margin-right: 6px; }
.grid-wrap { flex: 1; min-height: 0; overflow: hidden; background: #fff; border-top: 1px solid #888; }
table { width: 610px; table-layout: fixed; border-collapse: separate; border-spacing: 0; font-family: "Noto Sans", "Noto Sans CJK KR", sans-serif; font-size: 12px; line-height: 18px; }
.c1 { width: 130px; } .c2 { width: 80px; }
th, td { height: 19px; padding: 0; overflow: hidden; white-space: nowrap; border-right: 1px solid #d4d4d4; border-bottom: 1px solid #d8d8d8; }
th { font-weight: normal; font-size: 13px; background: #f0f0f0; border-color: #8e8e8e; text-align: center; }
td { text-align: right; padding-right: 5px; }
td:nth-child(1) { text-align: center; padding: 0; }
td:nth-child(2), td:nth-child(3) { text-align: left; padding: 0 0 0 6px; }
td:nth-child(2) { font-size: 13px; }
tr:nth-child(even) td { background: #f3f3f3; }
.data tr:nth-child(even):not(:last-child) td { border-bottom-color: #0c0c3c; }
.data .picked:nth-child(even) td { background: #0a78d4; color: #fff; }
.n { color: #1414a0; }
.p { color: #b41420; }
.hscroll { display: flex; height: 11px; background: #f6f6f6; border-bottom: 1px solid #777; }
.hscroll button { width: 17px; background: #f4f4f4; border-right: 1px solid #888; }
.thumb { width: 412px; background: #f0f0f0; border-right: 2px solid #777; border-bottom: 1px solid #888; margin-right: auto; }
.tabs { display: flex; height: 22px; padding: 0 0 1px 3px; border-top: 1px solid #5a6470; }
.tabs button { border: 1px solid #666; border-top: 0; background: #b3b0aa; border-radius: 0 0 4px 4px; }
.tabs .on { background: #a5c0db; border-color: #fff; }
.t54 { width: 54px; } .t64 { width: 64px; } .t90 { width: 90px; }

/* bottom bars */
footer { background: #1c2d45; color: #fff; }
.tasks { height: 24px; display: flex; align-items: flex-end; gap: 3px; padding-bottom: 1px; background: #203450; border-bottom: 1px solid #3c506c; }
.tasks .grip { margin-right: 3px; align-self: center; height: 16px; }
.task { display: flex; justify-content: space-between; align-items: center; width: 94px; height: 19px; padding: 0 5px; background: #34435c; border: 1px solid #0c1828; color: #dde4ee; }
.task button { color: #8fa0b8; }
.task-icons { margin: 0 8px 4px auto; display: flex; gap: 5px; }
.ticker { display: flex; height: 42px; align-items: center; padding-bottom: 1px; }
.ticker .grip { height: 34px; margin-right: 6px; }
.rows { flex: 1; min-width: 0; display: grid; gap: 2px; }
.row { display: grid; grid-template-columns: 66px 300px repeat(4, 66px 1fr); height: 18px; line-height: 18px; }
.row b { background: #0c2858; font-weight: normal; font-size: 12px; padding-left: 5px; overflow: hidden; white-space: nowrap; }
.row .bar { width: 100%; height: 18px; }
.row p { display: flex; align-items: center; background: #f6f5f3; font-size: 11px; padding-left: 3px; white-space: nowrap; overflow: hidden; border-right: 1px solid #0c2858; }
.row i { margin: 0 6px 0 15px; border: 5px solid transparent; border-top: 9px solid currentColor; border-bottom: 0; }
.row .up i { border-top: 0; border-bottom: 9px solid currentColor; }
.row i + span { margin-right: 14px; }
.row em { margin-left: 16px; font-style: normal; color: #000; }
.dn { color: #1560bd; }
.up { color: #c01820; }
.foot-btns { display: flex; gap: 2px; padding: 0 5px 0 4px; }
.foot-btns button { width: 24px; height: 38px; flex-direction: column; gap: 2px; background: #30435f; color: #fff; font-size: 12px; }
```
